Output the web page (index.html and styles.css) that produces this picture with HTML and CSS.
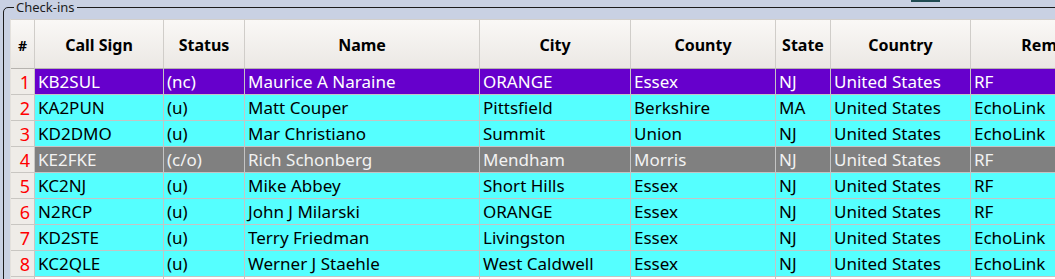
FILE: index.html
```html
<!DOCTYPE html>
<html>
<head>
<meta charset="utf-8">
<link rel="stylesheet" href="styles.css">
</head>
<body>
<div class="topfrag"></div>
<fieldset class="group">
<legend class="group-title">Check-ins</legend>
<table class="grid">
<thead>
<tr>
<th class="rh c-num">#</th>
<th class="c-call">Call Sign</th>
<th class="c-status">Status</th>
<th class="c-name">Name</th>
<th class="c-city">City</th>
<th class="c-county">County</th>
<th class="c-state">State</th>
<th class="c-country">Country</th>
<th class="c-rem">Remarks</th>
</tr>
</thead>
<tbody>
<tr class="purple"><th class="rh">1</th><td>KB2SUL</td><td>(nc)</td><td>Maurice A Naraine</td><td>ORANGE</td><td>Essex</td><td>NJ</td><td>United States</td><td>RF</td></tr>
<tr class="cyan"><th class="rh">2</th><td>KA2PUN</td><td>(u)</td><td>Matt Couper</td><td>Pittsfield</td><td>Berkshire</td><td>MA</td><td>United States</td><td>EchoLink</td></tr>
<tr class="cyan"><th class="rh">3</th><td>KD2DMO</td><td>(u)</td><td>Mar Christiano</td><td>Summit</td><td>Union</td><td>NJ</td><td>United States</td><td>EchoLink</td></tr>
<tr class="gray"><th class="rh">4</th><td>KE2FKE</td><td>(c/o)</td><td>Rich Schonberg</td><td>Mendham</td><td>Morris</td><td>NJ</td><td>United States</td><td>RF</td></tr>
<tr class="cyan"><th class="rh">5</th><td>KC2NJ</td><td>(u)</td><td>Mike Abbey</td><td>Short Hills</td><td>Essex</td><td>NJ</td><td>United States</td><td>RF</td></tr>
<tr class="cyan"><th class="rh">6</th><td>N2RCP</td><td>(u)</td><td>John J Milarski</td><td>ORANGE</td><td>Essex</td><td>NJ</td><td>United States</td><td>RF</td></tr>
<tr class="cyan"><th class="rh">7</th><td>KD2STE</td><td>(u)</td><td>Terry Friedman</td><td>Livingston</td><td>Essex</td><td>NJ</td><td>United States</td><td>EchoLink</td></tr>
<tr class="cyan"><th class="rh">8</th><td>KC2QLE</td><td>(u)</td><td>Werner J Staehle</td><td>West Caldwell</td><td>Essex</td><td>NJ</td><td>United States</td><td>EchoLink</td></tr>
<tr class="white"><th class="rh"></th><td></td><td></td><td></td><td></td><td></td><td></td><td></td><td></td></tr>
</tbody>
</table>
</fieldset>
</body>
</html>
```

FILE: styles.css
```css
html, body {
  margin: 0;
  padding: 0;
  width: 1055px;
  height: 279px;
  overflow: hidden;
  background: #c9d1e3;
}

body {
  position: relative;
  font-family: "Noto Sans", "DejaVu Sans", sans-serif;
  color: #000;
}

.topfrag {
  position: absolute;
  left: 911px;
  top: 0;
  width: 29px;
  height: 2px;
  background: #1f4b52;
}

.group {
  margin: 0 0 0 3px;
  padding: 4px 0 0 6px;
  border: 1px solid #1c1c1c;
  border-radius: 5px 0 0 0;
  width: 1300px;
  min-width: 0;
  box-sizing: border-box;
}

.group-title {
  margin-left: 4px;
  padding: 0 2px;
  font-size: 13px;
  line-height: 15px;
  color: #1c1c1c;
}

.grid {
  border-collapse: separate;
  border-spacing: 0;
  table-layout: fixed;
  width: 1132px;
  border-left: 1px solid #e4e1dd;
  border-top: 1px solid #d2cfcb;
  font-size: 17px;
}

.grid th,
.grid td {
  box-sizing: border-box;
  padding: 0 0 0 3px;
  white-space: nowrap;
  overflow: hidden;
  text-align: left;
  font-weight: normal;
  border-right: 1px solid #c4c4c4;
  border-bottom: 1px solid #c4c4c4;
}

.grid thead th {
  height: 49px;
  padding: 2px 0 0 0;
  text-align: center;
  font-weight: bold;
  font-size: 16px;
  background: linear-gradient(#faf8f6, #ebe8e4);
  border-right: 1px solid #d0cdc9;
  border-bottom: 1px solid #b6b3af;
}

.grid tbody tr {
  height: 26px;
}

.grid tbody td,
.grid tbody th {
  height: 26px;
  line-height: 24px;
}

.c-num { width: 24px; }
.c-call { width: 129px; }
.c-status { width: 81px; }
.c-name { width: 235px; }
.c-city { width: 151px; }
.c-county { width: 145px; }
.c-state { width: 55px; }
.c-country { width: 140px; }
.c-rem { width: 172px; }

.grid thead th.rh {
  font-size: 14px;
}

.grid tbody th.rh {
  text-align: right;
  padding: 0 4px 0 0;
  color: #ff0000;
  font-size: 18px;
  background: #efece8;
  border-right: 1px solid #c9c6c2;
  border-bottom: 1px solid #c9c6c2;
}

.purple td {
  background: #6600cc;
  color: #ffffff;
}

.cyan td {
  background: #55ffff;
  color: #000000;
}

.gray td {
  background: #808080;
  color: #f2f2f2;
}

.white td {
  background: #ffffff;
}
```
